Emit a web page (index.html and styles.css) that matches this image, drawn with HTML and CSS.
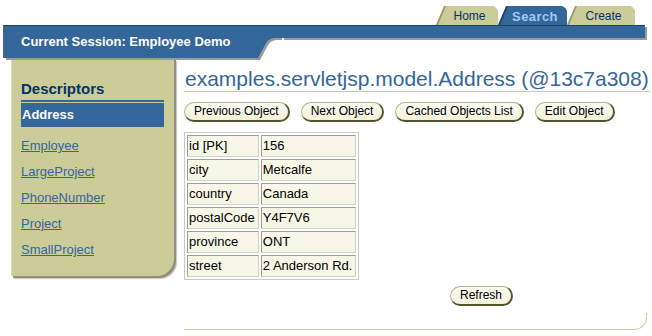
FILE: index.html
```html
<!DOCTYPE html>
<html>
<head>
<meta charset="utf-8">
<link rel="stylesheet" href="styles.css">
</head>
<body>
<header class="top">
  <nav class="tabs">
    <div class="tab tab-home"><span class="tab-in">Home</span></div>
    <div class="tab tab-search tab-active"><span class="tab-in">Search</span></div>
    <div class="tab tab-create"><span class="tab-in">Create</span></div>
  </nav>
  <div class="bar">
    <div class="bar-left">Current Session: Employee Demo</div>
    <svg class="bar-curve" width="24" height="35" viewBox="0 0 24 35">
      <path transform="translate(2,2)" d="M0,0 H24 V13 H17 Q10,13 7,20 L0,33 Z" fill="#9a9a9a"/>
      <path d="M0,0 H24 V13 H17 Q10,13 7,20 L0,33 Z" fill="#336699"/>
      <path d="M0,0.5 H24" stroke="#1e426c" stroke-width="1"/>
    </svg>
    <div class="bar-right"></div>
  </div>
</header>
<div class="body">
  <aside class="side">
    <div class="side-title">Descriptors</div>
    <div class="side-current">Address</div>
    <ul class="side-links">
      <li><a href="#">Employee</a></li>
      <li><a href="#">LargeProject</a></li>
      <li><a href="#">PhoneNumber</a></li>
      <li><a href="#">Project</a></li>
      <li><a href="#">SmallProject</a></li>
    </ul>
  </aside>
  <main class="main">
    <h1 class="title">examples.servletjsp.model.Address (@13c7a308)</h1>
    <div class="actions">
      <button class="btn">Previous Object</button>
      <button class="btn">Next Object</button>
      <button class="btn">Cached Objects List</button>
      <button class="btn">Edit Object</button>
    </div>
    <table class="attrs">
      <tr><td>id [PK]</td><td>156</td></tr>
      <tr><td>city</td><td>Metcalfe</td></tr>
      <tr><td>country</td><td>Canada</td></tr>
      <tr><td>postalCode</td><td>Y4F7V6</td></tr>
      <tr><td>province</td><td>ONT</td></tr>
      <tr><td>street</td><td>2 Anderson Rd.</td></tr>
    </table>
    <div class="refresh-row"><button class="btn">Refresh</button></div>
    <div class="foot"></div>
  </main>
</div>
</body>
</html>
```
FILE: styles.css
```css
html, body {
  margin: 0;
  padding: 0;
  background: #ffffff;
}
body {
  width: 652px;
  font-family: "Liberation Sans", Arial, sans-serif;
  color: #000;
}

/* tabs */
.tabs {
  display: flex;
  justify-content: flex-end;
  padding: 6px 17px 0 0;
  height: 19px;
}
.tab {
  height: 19px;
  display: flex;
  background: #99996a;
  clip-path: polygon(0 100%, 8px 0, 100% 0, 100% 100%);
  border-top-right-radius: 7px;
}
.tab-in {
  flex: 1;
  margin-left: 2px;
  background: #cccc99;
  clip-path: polygon(0 100%, 8px 0, 100% 0, 100% 100%);
  border-top-right-radius: 7px;
  box-sizing: border-box;
  padding: 2px 0 0 3px;
  line-height: 17px;
  text-align: center;
  font-size: 12px;
  color: #003366;
}
.tab-home { width: 62px; }
.tab-search { width: 69px; }
.tab-create { width: 68px; }
.tab-active { background: #1e426c; }
.tab-active .tab-in {
  background: #336699;
  color: #99ccff;
  font-weight: bold;
  font-size: 13px;
  letter-spacing: 0.4px;
  padding-left: 3px;
}

/* session bar */
.bar {
  position: relative;
  z-index: 1;
  display: flex;
  align-items: flex-start;
  height: 33px;
  margin: 0 7px 0 4px;
}
.bar-left {
  width: 254px;
  height: 33px;
  box-sizing: border-box;
  padding-left: 17px;
  background: #336699;
  border-top: 1px solid #1e426c;
  box-shadow: -1px 0 0 #54627a, 2px 2px 0 #9a9a9a;
  color: #ffffff;
  font-weight: bold;
  font-size: 13px;
  line-height: 31px;
}
.bar-curve {
  display: block;
  flex: none;
}
.bar-right {
  flex: 1;
  height: 13px;
  box-sizing: border-box;
  background: #336699;
  border-top: 1px solid #1e426c;
  box-shadow: 2px 2px 0 #9a9a9a;
}

/* body */
.body {
  display: flex;
  align-items: flex-start;
}
.side {
  width: 163px;
  height: 218px;
  box-sizing: border-box;
  margin-left: 11px;
  padding: 22px 10px 0 9px;
  background: #cccc99;
  border-left: 1px solid #dcdcb0;
  border-bottom-right-radius: 17px;
  box-shadow: 2px 2px 0 #8f8f7c, 3px 3px 1px #c4c4c4;
}
.side-title {
  font-size: 15px;
  font-weight: bold;
  line-height: 18px;
  color: #003366;
  padding-bottom: 2px;
  border-bottom: 2px solid #336699;
}
.side-current {
  margin-top: 1px;
  height: 24px;
  background: #336699;
  color: #ffffff;
  font-weight: bold;
  font-size: 13px;
  line-height: 24px;
  padding-left: 1px;
}
.side-links {
  list-style: none;
  margin: 6px 0 0 0;
  padding: 0;
}
.side-links li {
  font-size: 13px;
  line-height: 26px;
}
.side-links a {
  color: #336699;
  text-decoration: underline;
}

.main {
  flex: 1;
  margin: 0 2px 0 10px;
  padding-top: 9px;
}
.title {
  margin: 0;
  font-size: 21px;
  font-weight: normal;
  line-height: 24px;
  color: #336699;
  border-bottom: 1px solid #cccc99;
  padding-left: 1px;
}
.actions {
  display: flex;
  gap: 11px;
  margin-top: 10px;
}
.btn {
  height: 20px;
  box-sizing: border-box;
  margin: 0;
  padding: 0 9px;
  border-style: solid;
  border-width: 1px 2px 2px 1px;
  border-color: #b2b28a #55552a #55552a #b2b28a;
  border-radius: 10px;
  background: linear-gradient(#fbfbf1, #f1f1de);
  font-family: "Liberation Sans", Arial, sans-serif;
  font-size: 12px;
  line-height: 17px;
  color: #000;
}
.attrs {
  margin-top: 10px;
  border: 1px solid #c8c8c8;
  border-spacing: 2px;
  font-size: 13px;
}
.attrs td {
  background: #f7f7e7;
  border-style: solid;
  border-width: 1px;
  border-color: #9c9c9c #d0d0c4 #d0d0c4 #9c9c9c;
  padding: 0 3px 0 1px;
  line-height: 20px;
  white-space: nowrap;
}
.refresh-row {
  display: flex;
  margin-top: 6px;
  padding-left: 266px;
}
.foot {
  margin: 7px 3px 0 0;
  height: 16px;
  border-right: 1px solid #cccc99;
  border-bottom: 1px solid #cccc99;
  border-bottom-right-radius: 13px;
}
```
